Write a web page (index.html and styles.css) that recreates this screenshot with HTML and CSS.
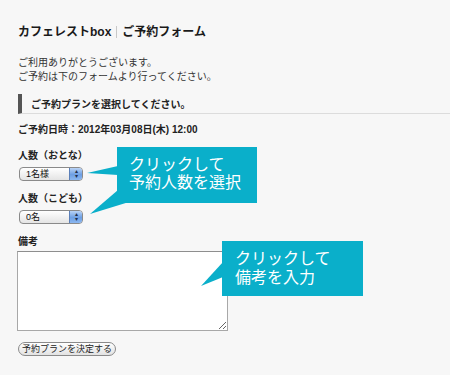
FILE: index.html
```html
<!DOCTYPE html>
<html lang="ja">
<head>
    <meta charset="UTF-8">
    <title>カフェレストbox | ご予約フォーム</title>
    <link rel="stylesheet" href="styles.css">
</head>
<body>

    <div class="page">
        <h1>カフェレストbox<span class="sep"></span>ご予約フォーム</h1>

        <p class="intro">ご利用ありがとうございます。<br>ご予約は下のフォームより行ってください。</p>

        <h2>ご予約プランを選択してください。</h2>

        <p class="date">ご予約日時：2012年03月08日(木) 12:00</p>

        <!-- Reservation form -->
        <form class="reserve">
            <label class="label first">人数（おとな）</label>
            <div class="select">
                <select>
                    <option>1名様</option>
                    <option>2名様</option>
                </select>
            </div>

            <label class="label">人数（こども）</label>
            <div class="select">
                <select>
                    <option>0名</option>
                    <option>1名</option>
                </select>
            </div>

            <label class="label">備考</label>
            <textarea class="note"></textarea>

            <button type="button" class="submit">予約プランを決定する</button>
        </form>

        <!-- Help callouts -->
        <div class="callout callout-people">
            <svg class="tail" width="60" height="80" viewBox="-40 0 60 80">
                <polygon points="1,19 -30,26 1,28" />
                <polygon points="1,43 -27,67 12,55" />
            </svg>
            クリックして<br>予約人数を選択
        </div>

        <div class="callout callout-note">
            <svg class="tail" width="40" height="60" viewBox="-30 0 40 60">
                <polygon points="1,21 -21,45 1,36" />
            </svg>
            クリックして<br>備考を入力
        </div>
    </div>

</body>
</html>
```

FILE: styles.css
```css
body {
    margin: 0;
    padding: 0;
    background-color: #f7f7f7;
    color: #222;
    font-family: "Liberation Sans", "Noto Sans CJK JP", sans-serif;
    font-size: 10px;
}

.page {
    position: relative;
    padding: 24px 0 0 18px;
    height: 351px;
    overflow: hidden;
}

h1 {
    margin: 0;
    font-size: 12px;
    line-height: 16px;
    font-weight: bold;
    color: #1a1a1a;
}

.sep {
    display: inline-block;
    width: 1px;
    height: 12px;
    margin: 0 5px;
    vertical-align: -2px;
    background-color: #c8c8c8;
}

.intro {
    margin: 16px 0 0;
    line-height: 14px;
    color: #333;
}

h2 {
    margin: 10px 0 0;
    padding: 3px 0 0 9px;
    height: 16px;
    line-height: 16px;
    font-size: 10px;
    font-weight: bold;
    border-left: 4px solid #555;
    border-bottom: 1px solid #dcdcdc;
}

.date {
    margin: 9px 0 0;
    line-height: 14px;
    font-weight: bold;
}

.reserve {
    margin: 0;
}

.label {
    display: block;
    margin-top: 11px;
    line-height: 14px;
    font-weight: bold;
}

.label.first {
    margin-top: 12px;
}

.select {
    position: relative;
    width: 64px;
    height: 14px;
    margin: 4px 0 0 1px;
}

.select select {
    -webkit-appearance: none;
    appearance: none;
    display: block;
    width: 64px;
    height: 14px;
    margin: 0;
    padding: 0 0 0 6px;
    border: 1px solid #8a8a8a;
    border-radius: 4px;
    background: linear-gradient(#ffffff, #e4e4e4);
    font-family: inherit;
    font-size: 9px;
    line-height: 12px;
    color: #111;
}

.select::after {
    content: "▴\A▾";
    white-space: pre;
    position: absolute;
    top: 1px;
    right: 1px;
    width: 13px;
    height: 12px;
    border-left: 1px solid #5b7fb8;
    border-radius: 0 3px 3px 0;
    background: linear-gradient(#b9d3f6, #6d9fe3 55%, #8bb7f0);
    font-size: 6px;
    line-height: 5px;
    padding-top: 1px;
    box-sizing: border-box;
    text-align: center;
    color: #1f2f4a;
    pointer-events: none;
}

.note {
    display: block;
    width: 211px;
    height: 80px;
    margin: 2px 0 0 -1px;
    padding: 2px;
    box-sizing: border-box;
    border: 1px solid #a8a8a8;
    border-top-color: #8e8e8e;
    background-color: #fff;
    font-family: inherit;
    font-size: 10px;
}

.submit {
    display: block;
    margin-top: 11px;
    width: 98px;
    height: 14px;
    padding: 0;
    border: 1px solid #8a8a8a;
    border-radius: 7px;
    background: linear-gradient(#ffffff, #e2e2e2);
    font-family: inherit;
    font-size: 9px;
    line-height: 12px;
    color: #222;
}

.callout {
    position: absolute;
    background-color: #0aafca;
    color: #fff;
    font-size: 16px;
    line-height: 18px;
    box-sizing: border-box;
}

.callout .tail {
    position: absolute;
    top: 0;
    overflow: visible;
}

.callout .tail polygon {
    fill: #0aafca;
}

.callout-people {
    left: 117px;
    top: 147px;
    width: 140px;
    height: 56px;
    padding: 9px 0 0 12px;
}

.callout-people .tail {
    left: -40px;
}

.callout-note {
    left: 222px;
    top: 241px;
    width: 141px;
    height: 55px;
    padding: 8px 0 0 13px;
    line-height: 19px;
}

.callout-note .tail {
    left: -30px;
}
```
